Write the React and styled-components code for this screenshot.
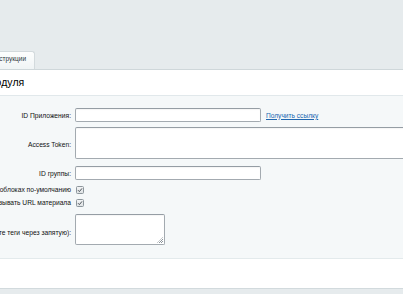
import React from 'react'
import styled, { createGlobalStyle } from 'styled-components'

const GlobalStyle = createGlobalStyle`
  html, body {
    margin: 0;
    padding: 0;
    background: #e6ebed;
    overflow: hidden;
    font-family: "Liberation Sans", Arial, sans-serif;
  }
`

const Page = styled.div`
  width: 620px;
  margin-left: -100px;
  padding-top: 51px;
`

const TabBar = styled.div`
  display: flex;
  align-items: flex-end;
  padding-left: 82px;
  height: 18px;
`

const Tab = styled.div`
  box-sizing: border-box;
  height: 18px;
  padding: 0 8px 3px;
  line-height: 14px;
  font-size: 6.5px;
  color: #2b3640;
  background: linear-gradient(#fdfefe, #f0f4f5);
  border: 1px solid #d3dadd;
  border-bottom: none;
  border-radius: 3px 3px 0 0;
`

const Panel = styled.div`
  border-top: 1px solid #cfd7da;
  border-bottom: 1px solid #d2dadd;
  background: #fff;
`

const Title = styled.div`
  height: 25px;
  line-height: 25px;
  padding-left: 34px;
  font-size: 10.5px;
  color: #000;
  border-bottom: 1px solid #e1e8eb;
`

const Form = styled.div`
  background: #f5f8f9;
  padding: 12px 0 13px;
  border-bottom: 1px solid #e3eaec;
`

const Row = styled.div`
  display: grid;
  grid-template-columns: 171px 1fr;
  column-gap: 4px;
  align-items: center;
  height: ${p => p.$h}px;
  margin-top: ${p => p.$mt || 0}px;
`

const Label = styled.div`
  text-align: right;
  white-space: nowrap;
  font-size: 6.7px;
  color: #111;
  padding-top: ${p => p.$pt || 0}px;
`

const Field = styled.div`
  display: flex;
  align-items: center;
  gap: 5px;
`

const fieldBorder = `
  box-sizing: border-box;
  border: 1px solid #a3aab0;
  border-top-color: #959da4;
  border-radius: 2px;
  background: #fff;
  box-shadow: inset 0 1px 1px rgba(0, 0, 0, 0.04);
  outline: none;
  margin: 0;
  padding: 0 2px;
`

const Input = styled.input`
  ${fieldBorder}
  width: 186px;
  height: 14px;
  font-size: 6.5px;
`

const TextArea = styled.textarea`
  ${fieldBorder}
  display: block;
  resize: none;
  width: ${p => p.$w}px;
  height: ${p => p.$h}px;
  font-size: 6.5px;
`

const AreaWrap = styled.div`
  position: relative;
  width: fit-content;
`

const Grip = styled.span`
  position: absolute;
  right: 2px;
  bottom: 2px;
  width: 6px;
  height: 6px;
  background: repeating-conic-gradient(#8d959b 0 25%, transparent 0 50%) 0 0 / 2px 2px;
  clip-path: polygon(100% 0, 100% 100%, 0 100%);
`

const Link = styled.a`
  font-size: 6.6px;
  color: #2067b0;
  text-decoration: underline;
  white-space: nowrap;
`

const Check = styled.svg`
  display: block;
  width: 8px;
  height: 8px;
  margin-left: 1px;
`

const Footer = styled.div`
  height: 29px;
`

const Checkbox = () => (
  <Check viewBox="0 0 8 8">
    <defs>
      <linearGradient id="cb" x1="0" y1="0" x2="0" y2="1">
        <stop offset="0" stopColor="#f4f5f6" />
        <stop offset="1" stopColor="#dde1e3" />
      </linearGradient>
    </defs>
    <rect x="0.5" y="0.5" width="7" height="7" rx="1" fill="url(#cb)" stroke="#8d969c" />
    <polyline points="2,4.2 3.4,5.6 6,2.4" fill="none" stroke="#4b5258" strokeWidth="1" />
  </Check>
)

export default function App() {
  return (
    <>
      <GlobalStyle />
      <Page>
        <TabBar>
          <Tab>Инструкции</Tab>
        </TabBar>
        <Panel>
          <Title>Настройки модуля</Title>
          <Form>
            <Row $h={14}>
              <Label>ID Приложения:</Label>
              <Field>
                <Input />
                <Link href="#">Получить ссылку</Link>
              </Field>
            </Row>
            <Row $h={32} $mt={5}>
              <Label $pt={2}>Access Token:</Label>
              <TextArea $w={420} $h={32} />
            </Row>
            <Row $h={14} $mt={7}>
              <Label>ID группы:</Label>
              <Input />
            </Row>
            <Row $h={13} $mt={3}>
              <Label>Включить в инфоблоках по-умолчанию</Label>
              <Checkbox />
            </Row>
            <Row $h={13}>
              <Label>Показывать URL материала</Label>
              <Checkbox />
            </Row>
            <Row $h={31} $mt={5}>
              <Label $pt={6}>Хэштеги (укажите теги через запятую):</Label>
              <AreaWrap>
                <TextArea $w={90} $h={31} />
                <Grip />
              </AreaWrap>
            </Row>
          </Form>
          <Footer />
        </Panel>
      </Page>
    </>
  )
}
